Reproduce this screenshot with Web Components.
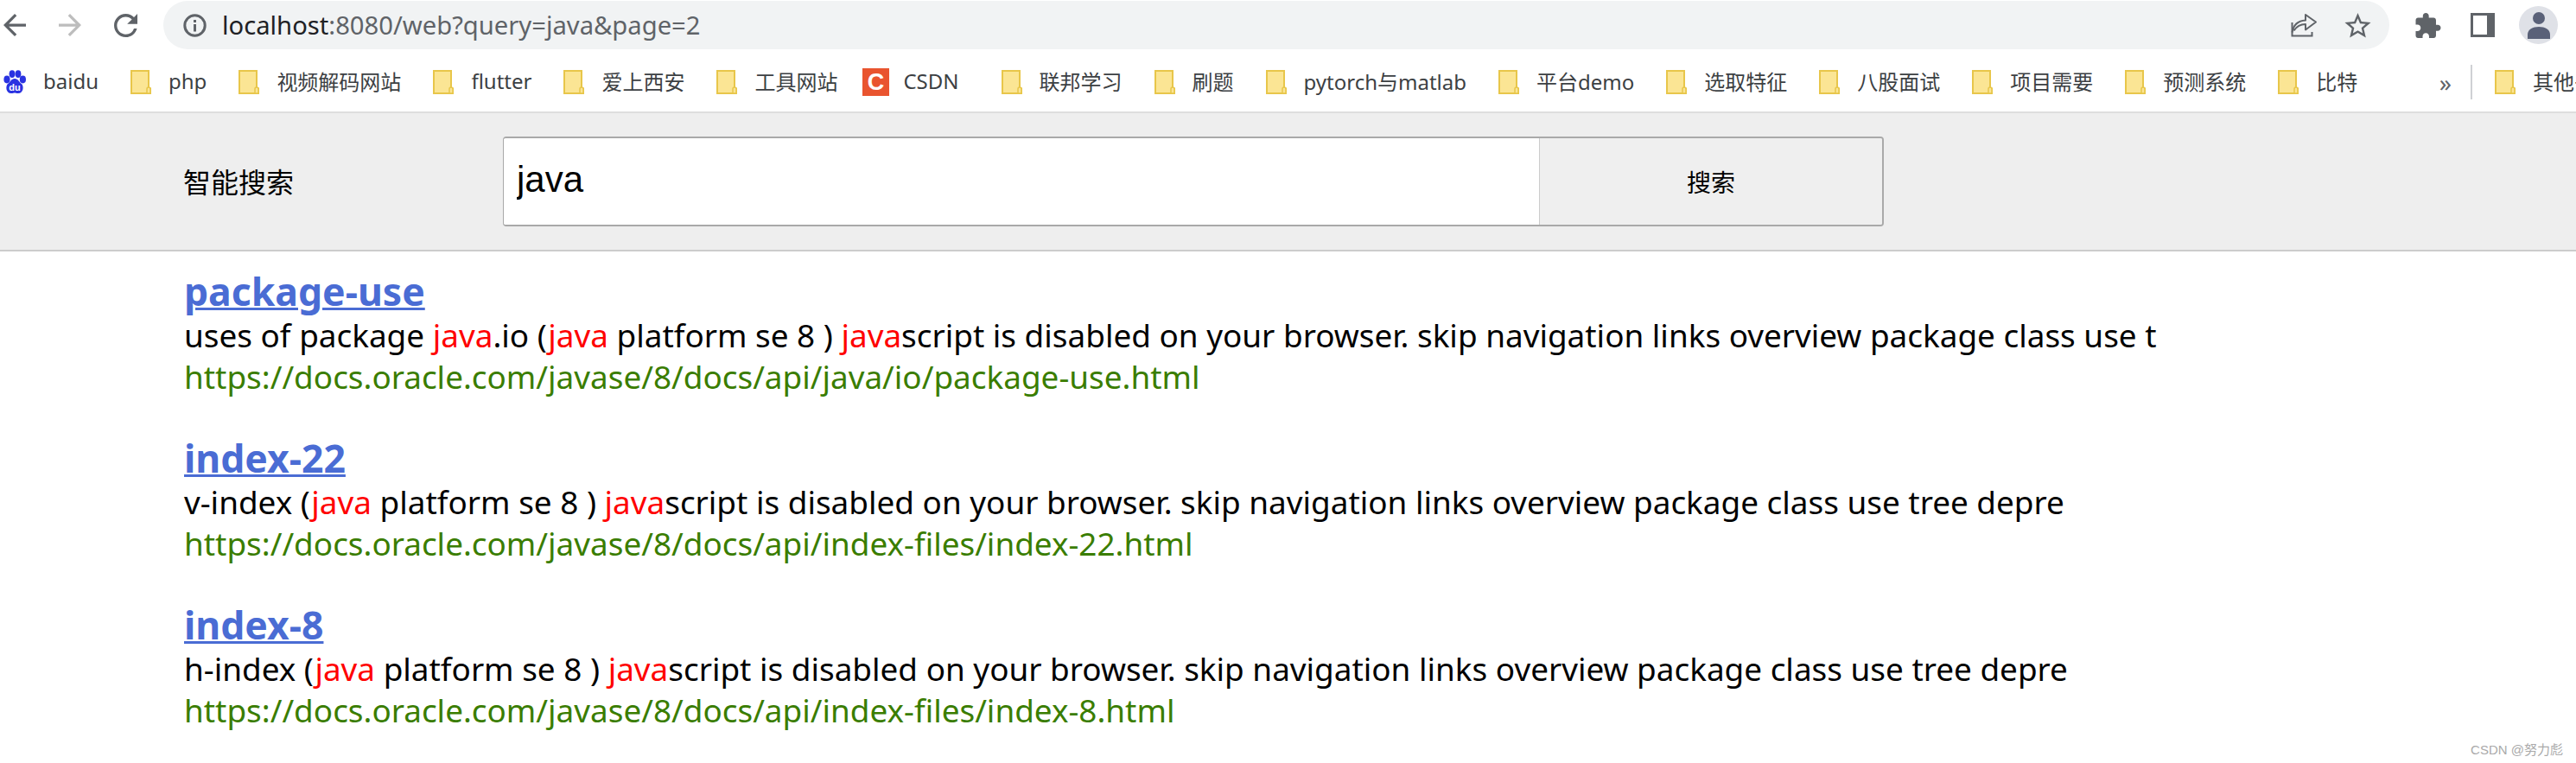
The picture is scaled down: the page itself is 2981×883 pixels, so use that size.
<!DOCTYPE html>
<html lang="zh">
<head>
<meta charset="utf-8">
<title>智能搜索</title>
<style>
    html, body { margin: 0; padding: 0; background: #fff; overflow: hidden; }
    body { width: 2981px; height: 883px; position: relative; font-family: "Noto Sans", "Noto Sans CJK SC", sans-serif; }
</style>
</head>
<body>
<browser-toolbar url-host="localhost" url-rest=":8080/web?query=java&amp;page=2"></browser-toolbar>
<bookmark-bar>
    <book-mark>
        <svg slot="icon" width="26" height="28" viewBox="0 0 26 28">
            <ellipse cx="4" cy="11" rx="3.6" ry="4.4" fill="#2932e1"/>
            <ellipse cx="10" cy="4.6" rx="3.4" ry="4.4" fill="#2932e1"/>
            <ellipse cx="17" cy="4.6" rx="3.4" ry="4.4" fill="#2932e1"/>
            <ellipse cx="22.4" cy="11" rx="3.6" ry="4.4" fill="#2932e1"/>
            <path d="M13 10c4 0 5 4 8 6 3 3 2 11-4 11-2 0-3-.6-4-.6s-2 .6-4 .6c-6 0-7-8-4-11 3-2 4-6 8-6z" fill="#2932e1"/>
            <text x="13" y="24" text-anchor="middle" font-family="Liberation Sans" font-weight="700" font-size="11" fill="#fff">du</text>
        </svg>
        baidu
    </book-mark>
    <book-mark>php</book-mark>
    <book-mark>视频解码网站</book-mark>
    <book-mark>flutter</book-mark>
    <book-mark>爱上西安</book-mark>
    <book-mark>工具网站</book-mark>
    <book-mark class="favicon">
        <svg slot="icon" width="31" height="32" viewBox="0 0 31 32">
            <rect width="31" height="32" fill="#e9542f"/>
            <text x="15.5" y="25" text-anchor="middle" font-family="Liberation Sans" font-weight="700" font-size="27" fill="#fff">C</text>
        </svg>
        CSDN
    </book-mark>
    <book-mark>联邦学习</book-mark>
    <book-mark>刷题</book-mark>
    <book-mark>pytorch与matlab</book-mark>
    <book-mark>平台demo</book-mark>
    <book-mark>选取特征</book-mark>
    <book-mark>八股面试</book-mark>
    <book-mark>项目需要</book-mark>
    <book-mark>预测系统</book-mark>
    <book-mark>比特</book-mark>
    <book-mark slot="other">其他书签</book-mark>
</bookmark-bar>
<search-header label="智能搜索" value="java" action="搜索"></search-header>
<result-list>
    <search-result>
        <span slot="title">package-use</span>
        <span slot="summary">uses of package <hit-word>java</hit-word>.io (<hit-word>java</hit-word> platform se 8 ) <hit-word>java</hit-word>script is disabled on your browser. skip navigation links overview package class use t</span>
        <span slot="link">https://docs.oracle.com/javase/8/docs/api/java/io/package-use.html</span>
    </search-result>
    <search-result>
        <span slot="title">index-22</span>
        <span slot="summary">v-index (<hit-word>java</hit-word> platform se 8 ) <hit-word>java</hit-word>script is disabled on your browser. skip navigation links overview package class use tree depre</span>
        <span slot="link">https://docs.oracle.com/javase/8/docs/api/index-files/index-22.html</span>
    </search-result>
    <search-result>
        <span slot="title">index-8</span>
        <span slot="summary">h-index (<hit-word>java</hit-word> platform se 8 ) <hit-word>java</hit-word>script is disabled on your browser. skip navigation links overview package class use tree depre</span>
        <span slot="link">https://docs.oracle.com/javase/8/docs/api/index-files/index-8.html</span>
    </search-result>
</result-list>
<water-mark>CSDN @努力彪</water-mark>

<script>
(function() {
    const toolbarTemplate = document.createElement("template")
    toolbarTemplate.innerHTML = `
<style>
    :host {
        display: flex;
        align-items: center;
        height: 62px;
        box-sizing: border-box;
        padding: 1px 21px 5px 4px;
        background: #fff;
        color: #5f6368;
    }
    svg { display: block; flex: none; fill: currentColor; }
    .nav { margin-right: 38px; }
    .nav.off { color: #bdbdbd; }
    .nav.last { margin-right: 30px; }
    .omnibox {
        flex: 1;
        height: 56px;
        display: flex;
        align-items: center;
        box-sizing: border-box;
        padding: 0 21px 0 23px;
        border-radius: 28px;
        background: #f1f3f4;
        margin-right: 30px;
    }
    .url {
        flex: 1;
        margin-left: 18px;
        font-size: 29.2px;
        color: #5f6368;
        white-space: nowrap;
    }
    .url b { font-weight: 400; color: #202124; }
    .omni-icon { margin-left: 31px; }
    .ext { margin-right: 34px; }
    .panel { margin-right: 28px; }
    .avatar {
        width: 45px;
        height: 44px;
        border-radius: 50%;
        background: #dfe1e7;
        display: flex;
        align-items: center;
        justify-content: center;
        flex: none;
    }
</style>
<svg class="nav" width="26" height="26" viewBox="4 4 16 16"><path d="M20 11H7.83l5.59-5.59L12 4l-8 8 8 8 1.41-1.41L7.83 13H20v-2z"/></svg>
<svg class="nav off" width="26" height="26" viewBox="4 4 16 16"><path d="M4 11h12.17l-5.59-5.59L12 4l8 8-8 8-1.41-1.41L16.17 13H4v-2z"/></svg>
<svg class="nav last" width="27" height="27" viewBox="4 4 16 16"><path d="M17.65 6.35A7.958 7.958 0 0012 4c-4.42 0-7.99 3.58-7.99 8s3.57 8 7.99 8c3.73 0 6.84-2.55 7.73-6h-2.08A5.99 5.99 0 0112 18c-3.31 0-6-2.69-6-6s2.69-6 6-6c1.66 0 3.14.69 4.22 1.78L13 11h7V4l-2.35 2.35z"/></svg>
<div class="omnibox">
    <svg width="27" height="27" viewBox="0 0 27 27"><circle cx="13.5" cy="13.5" r="11.7" fill="none" stroke="currentColor" stroke-width="3"/><rect x="12" y="12" width="3" height="8.5"/><rect x="12" y="7" width="3" height="3"/></svg>
    <div class="url"><b id="host"></b><span id="rest"></span></div>
    <svg class="omni-icon" width="31" height="28" viewBox="0 0 31 28"><path d="M1.5 11v15.500h23V22" fill="none" stroke="currentColor" stroke-width="2"/><path d="M1.500 26.500C3 18 8 13 17 12.500V6l12 8.500-12 9v-6.500c-6 0-10 2-13.500 7.500" fill="none" stroke="currentColor" stroke-width="2" stroke-linejoin="round" transform="translate(0 -4)"/></svg>
    <svg class="omni-icon" width="31" height="29" viewBox="2 2 20 19.270"><path d="M22 9.24l-7.190-.62L12 2 9.190 8.630 2 9.240l5.460 4.730L5.820 21 12 17.270 18.180 21l-1.630-7.030L22 9.240zM12 15.400l-3.760 2.270 1-4.280-3.320-2.880 4.380-.38L12 6.100l1.710 4.040 4.380.38-3.320 2.880 1 4.280L12 15.400z"/></svg>
</div>
<svg class="ext" width="30" height="29" viewBox="2 1 21 21"><path d="M20.500 11H19V7c0-1.100-.9-2-2-2h-4V3.500C13 2.120 11.880 1 10.500 1S8 2.120 8 3.500V5H4c-1.100 0-1.990.9-1.990 2v3.800H3.500c1.490 0 2.700 1.210 2.700 2.700s-1.210 2.700-2.700 2.700H2V20c0 1.100.9 2 2 2h3.800v-1.500c0-1.490 1.210-2.700 2.700-2.700 1.490 0 2.700 1.210 2.700 2.700V22H17c1.100 0 2-.9 2-2v-4h1.500c1.380 0 2.500-1.120 2.500-2.500S21.880 11 20.500 11z"/></svg>
<svg class="panel" width="28" height="28" viewBox="0 0 28 28"><path fill-rule="evenodd" d="M0 0h28v28H0zM3 3v22h16V3z"/></svg>
<div class="avatar">
    <svg width="26" height="32" viewBox="0 0 26 32"><circle cx="13" cy="8" r="7" fill="#5a6178"/><path d="M0 32v-5c0-6 6-9 13-9s13 3 13 9v5z" fill="#5a6178"/></svg>
</div>`
    class BrowserToolbar extends HTMLElement {
        constructor() {
            super();
            this.attachShadow({mode: "open"})
            this.shadowRoot.appendChild(toolbarTemplate.content.cloneNode(true))
            this.shadowRoot.getElementById("host").textContent = this.getAttribute("url-host")
            this.shadowRoot.getElementById("rest").textContent = this.getAttribute("url-rest")
        }
    }
    customElements.define("browser-toolbar", BrowserToolbar)

    const barTemplate = document.createElement("template")
    barTemplate.innerHTML = `
<style>
    :host {
        display: flex;
        align-items: center;
        height: 69px;
        box-sizing: border-box;
        padding: 0 0 2px 4px;
        background: #fff;
        border-bottom: 2px solid #dedede;
        overflow: hidden;
    }
    .items {
        display: flex;
        align-items: center;
        gap: 37px;
        width: 2762px;
        flex: none;
    }
    .more {
        flex: none;
        width: 95px;
        display: flex;
        align-items: center;
        justify-content: flex-end;
        gap: 22px;
        font: 28px "Noto Sans", sans-serif;
        color: #5f6368;
    }
    .sep { display: block; width: 2px; height: 40px; background: #cfd1d4; }
    .other { margin-left: 26px; flex: none; display: flex; }
    /* a real favicon sits tighter than the folder icons */
    ::slotted(.favicon) { --mark-gap: 16px; margin: 0 12px 0 -8px; }
</style>
<div class="items"><slot></slot></div>
<div class="more"><span>»</span><i class="sep"></i></div>
<div class="other"><slot name="other"></slot></div>`
    class BookmarkBar extends HTMLElement {
        constructor() {
            super();
            this.attachShadow({mode: "open"})
            this.shadowRoot.appendChild(barTemplate.content.cloneNode(true))
        }
    }
    customElements.define("bookmark-bar", BookmarkBar)

    const markTemplate = document.createElement("template")
    markTemplate.innerHTML = `
<style>
    :host {
        display: inline-flex;
        align-items: center;
        gap: var(--mark-gap, 20px);
        flex: none;
        font: 24px "Noto Sans", "Noto Sans CJK SC", sans-serif;
        color: #3c4043;
        white-space: nowrap;
    }
    ::slotted(svg) { display: block; flex: none; }
    svg { display: block; flex: none; }
    span { position: relative; top: -1px; }
</style>
<slot name="icon">
    <svg width="24" height="28" viewBox="0 0 24 28">
        <path d="M1 1h20v20.500h2V27H1z" fill="#fbe594" stroke="#e8c64a" stroke-width="2"/>
        <path d="M19 27v-5q0-2 2-2t2 2v5z" fill="#fbe594" stroke="#e8c64a" stroke-width="1.500"/>
    </svg>
</slot>
<span><slot></slot></span>`
    class BookMark extends HTMLElement {
        constructor() {
            super();
            this.attachShadow({mode: "open"})
            this.shadowRoot.appendChild(markTemplate.content.cloneNode(true))
        }
    }
    customElements.define("book-mark", BookMark)

    const headerTemplate = document.createElement("template")
    headerTemplate.innerHTML = `
<style>
    :host {
        display: flex;
        align-items: center;
        height: 160px;
        box-sizing: border-box;
        padding-left: 212px;
        background: #eee;
        border-bottom: 2px solid #ccc;
    }
    label {
        width: 370px;
        flex: none;
        padding-bottom: 2px;
        font: 32px "Noto Sans CJK SC", sans-serif;
        color: #000;
    }
    form {
        display: flex;
        width: 1598px;
        height: 104px;
        margin: 0;
        box-sizing: border-box;
        border: solid #a9a9a9;
        border-width: 2px 2px 2px 1px;
        border-radius: 4px;
        overflow: hidden;
    }
    input {
        flex: 1;
        min-width: 0;
        border: 0;
        outline: 0;
        padding: 0 0 4px 15px;
        background: #fff;
        font: 42px "Liberation Sans", sans-serif;
        color: #000;
    }
    button {
        width: 397px;
        flex: none;
        border: 0;
        border-left: 1px solid #ccc;
        background: #efefef;
        font: 28px "Noto Sans CJK SC", sans-serif;
        color: #000;
        padding: 0;
    }
</style>
<label id="label"></label>
<form onsubmit="return false">
    <input id="query" type="text">
    <button id="go" type="button"></button>
</form>`
    class SearchHeader extends HTMLElement {
        constructor() {
            super();
            this.attachShadow({mode: "open"})
            this.shadowRoot.appendChild(headerTemplate.content.cloneNode(true))
            this.shadowRoot.getElementById("label").textContent = this.getAttribute("label")
            this.shadowRoot.getElementById("query").setAttribute("value", this.getAttribute("value"))
            this.shadowRoot.getElementById("go").textContent = this.getAttribute("action")
        }
    }
    customElements.define("search-header", SearchHeader)

    const listTemplate = document.createElement("template")
    listTemplate.innerHTML = `
<style>
    :host {
        display: flex;
        flex-direction: column;
        gap: 42px;
        padding: 18px 0 0 213px;
    }
</style>
<slot></slot>`
    class ResultList extends HTMLElement {
        constructor() {
            super();
            this.attachShadow({mode: "open"})
            this.shadowRoot.appendChild(listTemplate.content.cloneNode(true))
        }
    }
    customElements.define("result-list", ResultList)

    const resultTemplate = document.createElement("template")
    resultTemplate.innerHTML = `
<style>
    :host {
        display: block;
        font: 36.9px/48px "Noto Sans", sans-serif;
        white-space: nowrap;
    }
    a { display: block; text-decoration: none; }
    .title {
        height: 55px;
        line-height: 55px;
        font-size: 44.5px;
        font-weight: 700;
        color: #4a6cd4;
        text-decoration: underline;
        text-decoration-thickness: 3px;
    }
    .summary { color: #000; }
    .link { color: #3a7d00; }
</style>
<a class="title" href="#"><slot name="title"></slot></a>
<div class="summary"><slot name="summary"></slot></div>
<div class="link"><slot name="link"></slot></div>`
    class SearchResult extends HTMLElement {
        constructor() {
            super();
            this.attachShadow({mode: "open"})
            this.shadowRoot.appendChild(resultTemplate.content.cloneNode(true))
        }
    }
    customElements.define("search-result", SearchResult)

    // no whitespace around the slot: it would show up between the words of the line
    const hitTemplate = document.createElement("template")
    hitTemplate.innerHTML = `<style>:host { display: inline; color: #f00; }</style><slot></slot>`
    class HitWord extends HTMLElement {
        constructor() {
            super();
            this.attachShadow({mode: "open"})
            this.shadowRoot.appendChild(hitTemplate.content.cloneNode(true))
        }
    }
    customElements.define("hit-word", HitWord)

    const markFootTemplate = document.createElement("template")
    markFootTemplate.innerHTML = `
<style>
    :host {
        position: absolute;
        right: 15px;
        bottom: 6px;
        font: 15px "Liberation Sans", "Noto Sans CJK SC", sans-serif;
        color: #aaa;
    }
</style>
<slot></slot>`
    class WaterMark extends HTMLElement {
        constructor() {
            super();
            this.attachShadow({mode: "open"})
            this.shadowRoot.appendChild(markFootTemplate.content.cloneNode(true))
        }
    }
    customElements.define("water-mark", WaterMark)
})()
</script>
</body>
</html>
